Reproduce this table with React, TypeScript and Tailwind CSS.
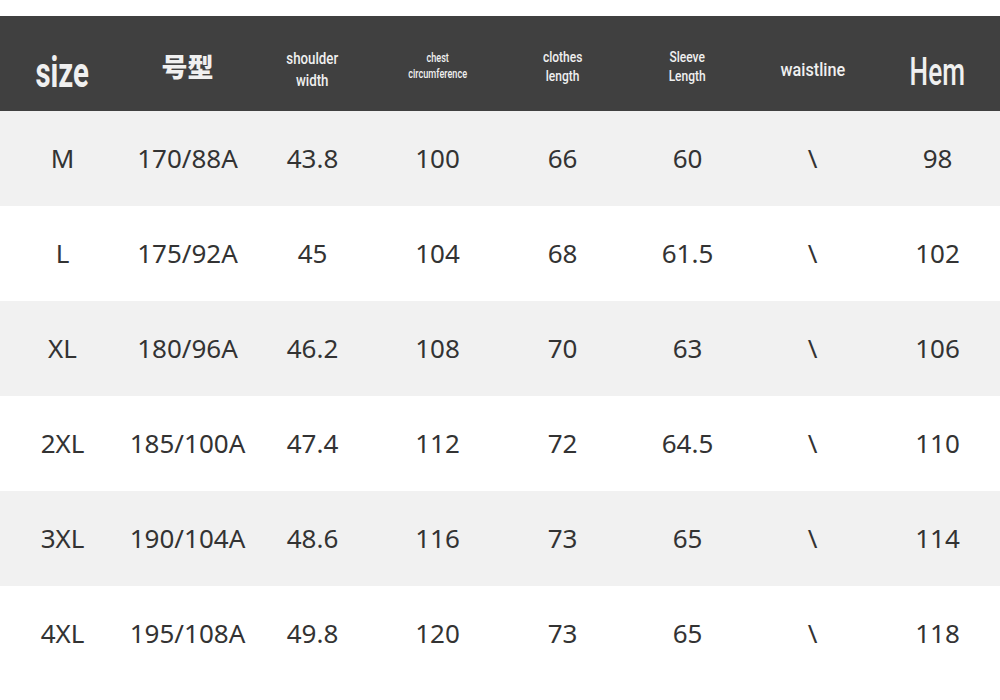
import React from 'react';

const rows = [
  ['M', '170/88A', '43.8', '100', '66', '60', '\\', '98'],
  ['L', '175/92A', '45', '104', '68', '61.5', '\\', '102'],
  ['XL', '180/96A', '46.2', '108', '70', '63', '\\', '106'],
  ['2XL', '185/100A', '47.4', '112', '72', '64.5', '\\', '110'],
  ['3XL', '190/104A', '48.6', '116', '73', '65', '\\', '114'],
  ['4XL', '195/108A', '49.8', '120', '73', '65', '\\', '118'],
];

export default function App() {
  return (
    <div className="w-[1000px] h-[700px] bg-white pt-4 overflow-hidden">
      <div className="grid grid-cols-8 h-[95px] bg-[#404040] text-[#f0f0f0] font-['Roboto',sans-serif]">
        <div className="flex items-center justify-center pt-[18px]">
          <span className="inline-block text-[42px] font-bold scale-x-[0.7]">size</span>
        </div>
        <div className="flex items-center justify-center pt-[3px] text-[26px] font-['Noto_Sans_CJK_SC',sans-serif] font-black">
          号型
        </div>
        <div className="flex items-center justify-center pt-[12px]">
          <span className="inline-block text-center text-[16px] leading-[22px] font-medium scale-x-[0.83]">shoulder<br />width</span>
        </div>
        <div className="flex items-center justify-center pt-[5px]">
          <span className="inline-block text-center text-[12px] leading-[16px] font-medium scale-x-[0.76]">chest<br />circumference</span>
        </div>
        <div className="flex items-center justify-center pt-[7px]">
          <span className="inline-block text-center text-[15px] leading-[19px] font-medium scale-x-[0.8]">clothes<br />length</span>
        </div>
        <div className="flex items-center justify-center pt-[7px]">
          <span className="inline-block text-center text-[15px] leading-[19px] font-medium scale-x-[0.8]">Sleeve<br />Length</span>
        </div>
        <div className="flex items-center justify-center pt-[12px]">
          <span className="inline-block text-[18px] font-medium scale-x-[0.9]">waistline</span>
        </div>
        <div className="flex items-center justify-center pt-[18px]">
          <span className="inline-block text-[39px] font-medium scale-x-[0.67]">Hem</span>
        </div>
      </div>
      {rows.map((r, i) => (
        <div
          key={r[0]}
          className={`grid grid-cols-8 h-[95px] font-['Noto_Sans',sans-serif] text-[26px] text-[#333] ${i % 2 === 0 ? 'bg-[#f1f1f1]' : 'bg-white'}`}
        >
          {r.map((c, j) => (
            <div key={j} className="flex items-center justify-center">{c}</div>
          ))}
        </div>
      ))}
    </div>
  );
}
